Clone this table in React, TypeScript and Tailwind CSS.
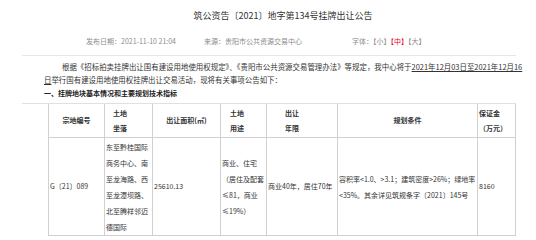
import React from 'react';

const cell = 'border-r border-b border-[#d0d0d0]';

export default function App() {
  return (
    <div className="w-[536px] h-[240px] overflow-hidden bg-white text-[#333] font-['Noto_Sans_CJK_SC',sans-serif]">
      <div className="ml-[22px] w-[494px]">
        <div className="pt-[10px] pl-[28px] text-center text-[9px] leading-[12px] text-[#333]">
          筑公资告〔2021〕地字第134号挂牌出让公告
        </div>
        <div className="mt-[14px] pb-[9px] border-b border-[#e6e6e6] flex text-[7px] leading-[10px] text-[#8c8c8c] whitespace-nowrap">
          <span className="ml-[64px]">发布日期：2021-11-10 21:04</span>
          <span className="ml-[28px]">来源：贵阳市公共资源交易中心</span>
          <span className="ml-[50px]">
            字体：【小】<span className="text-[#e60012]">【中】</span>【大】
          </span>
        </div>
        <div className="mt-[4px] pl-[22px] text-[7.45px] leading-[13px] text-[#333] whitespace-nowrap">
          <div className="pl-[18px]">
            根据《招标拍卖挂牌出让国有建设用地使用权规定》、《贵阳市公共资源交易管理办法》等规定，我中心将于
            <span className="underline">2021年12月03日至2021年12月16</span>
          </div>
          <div>
            <span className="underline">日</span>举行国有建设用地使用权挂牌出让交易活动，现将有关事项公告如下：
          </div>
        </div>
        <div className="mt-[1px] pb-[4px] pl-[22px] border-b border-[#e0e0e0] text-[7px] leading-[12px] font-bold text-[#222]">
          一、挂牌地块基本情况和主要规划技术指标
        </div>
        <div className="ml-[26px] w-[467px] grid grid-cols-[56px_48px_68px_46px_71px_140px_38px] grid-rows-[34px_98px] border-l border-[#d0d0d0] text-[7px] leading-[15px] text-[#333]">
          <div className={`${cell} flex items-center justify-center font-bold`}>宗地编号</div>
          <div className={`${cell} flex flex-col justify-center pl-[8px] font-bold`}>
            <span>土地</span>
            <span>坐落</span>
          </div>
          <div className={`${cell} flex items-center justify-center font-bold`}>出让面积(㎡)</div>
          <div className={`${cell} flex flex-col justify-center pl-[9px] font-bold`}>
            <span>土地</span>
            <span>用途</span>
          </div>
          <div className={`${cell} flex flex-col justify-center pl-[18px] font-bold`}>
            <span>出让</span>
            <span>年限</span>
          </div>
          <div className={`${cell} flex items-center justify-center font-bold`}>规划条件</div>
          <div className={`${cell} flex flex-col justify-center pl-[1px] font-bold whitespace-nowrap`}>
            <span>保证金</span>
            <span>（万元）</span>
          </div>

          <div className={`${cell} flex items-center pl-[1px] whitespace-nowrap`}>G〔21〕089</div>
          <div className={`${cell} flex flex-col justify-center pl-[1px] leading-[16px] whitespace-nowrap`}>
            <span>东至黔桂国际</span>
            <span>商务中心、南</span>
            <span>至龙海路、西</span>
            <span>至龙潭坝路、</span>
            <span>北至腾祥邻迈</span>
            <span>德国际</span>
          </div>
          <div className={`${cell} flex items-center pl-[1px]`}>25610.13</div>
          <div className={`${cell} flex flex-col justify-center pl-[1px] leading-[16px] whitespace-nowrap`}>
            <span>商业、住宅</span>
            <span>（居住及配套</span>
            <span>≤81，商业</span>
            <span>≤19%）</span>
          </div>
          <div className={`${cell} flex items-center pl-[1px] whitespace-nowrap`}>商业40年，居住70年</div>
          <div className={`${cell} flex flex-col justify-center pl-[1px] leading-[16px] whitespace-nowrap`}>
            <span>容积率&lt;1.0、&gt;3.1；建筑密度&gt;26%；绿地率</span>
            <span>&lt;35%。其余详见筑规条字〔2021〕145号</span>
          </div>
          <div className={`${cell} flex items-center pl-[1px]`}>8160</div>
        </div>
      </div>
    </div>
  );
}
